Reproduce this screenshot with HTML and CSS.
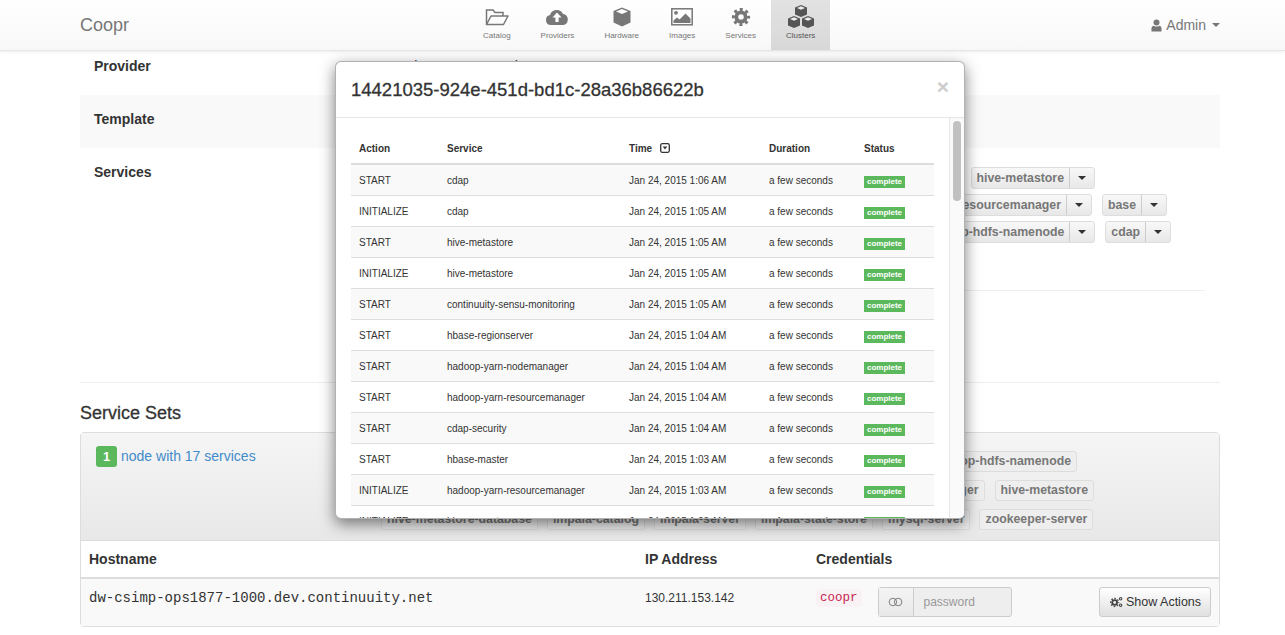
FILE: index.html
```html
<!DOCTYPE html>
<html lang="en">
<head>
    <meta charset="UTF-8">
    <title>Coopr - Cluster</title>
    <link rel="stylesheet" href="styles.css">
</head>
<body>
    <header class="navbar">
        <a class="brand">Coopr</a>
        <nav class="nav-icons">
            <a class="nav-item">
                <svg class="nav-svg" viewBox="0 0 24 20"><path d="M1.5 17.5V3h6.5l2 2.5h8V9" fill="none" stroke="#777" stroke-width="1.5"/><path d="M1.5 17.5 6 9h17l-4.5 8.5z" fill="none" stroke="#777" stroke-width="1.5" stroke-linejoin="round"/></svg>
                <span>Catalog</span>
            </a>
            <a class="nav-item">
                <svg class="nav-svg" viewBox="0 0 24 20"><path d="M6 18a5 5 0 0 1-1-9.9A7 7 0 0 1 18 7a5.6 5.6 0 0 1 .5 11z" fill="#777"/><path d="M12 5.5 16.5 10.5H13.6V15H10.4V10.5H7.5z" fill="#fff"/></svg>
                <span>Providers</span>
            </a>
            <a class="nav-item">
                <svg class="nav-svg" viewBox="0 0 24 20"><path d="M12 .5 20.5 4V15.5L12 19.5 3.5 15.5V4z" fill="#777"/><path d="M12 2 18 4.5 12 7 6 4.5z" fill="#fff"/></svg>
                <span>Hardware</span>
            </a>
            <a class="nav-item">
                <svg class="nav-svg" viewBox="0 0 24 20"><rect x="1.8" y="1.8" width="20.4" height="16" fill="none" stroke="#777" stroke-width="1.5"/><circle cx="6" cy="5.8" r="1.9" fill="#777"/><path d="M3.5 16v-2.5l3.5-3 2.5 2 6-6 5 5V16z" fill="#777"/></svg>
                <span>Images</span>
            </a>
            <a class="nav-item">
                <svg class="nav-svg" viewBox="0 0 24 20"><circle cx="12" cy="10" r="4.7" fill="none" stroke="#777" stroke-width="3.8"/><circle cx="12" cy="10" r="7.6" fill="none" stroke="#777" stroke-width="3" stroke-dasharray="3 2.97" stroke-dashoffset="1.5"/></svg>
                <span>Services</span>
            </a>
            <a class="nav-item active">
                <svg class="nav-svg cubes-svg" viewBox="0 0 28 24">
                    <defs>
                        <g id="small-cube"><path d="M6 0 12 2.5V9.5L6 12 0 9.5V2.5z" fill="#555"/><path d="M6 1.3 10 3 6 4.7 2 3z" fill="#eee"/></g>
                    </defs>
                    <use href="#small-cube" x="8" y="0"/>
                    <use href="#small-cube" x="1" y="11"/>
                    <use href="#small-cube" x="15" y="11"/>
                </svg>
                <span>Clusters</span>
            </a>
        </nav>
        <a class="user-menu">
            <svg class="user-svg" viewBox="0 0 12 14"><circle cx="6" cy="3.8" r="3.3" fill="#777"/><path d="M.5 13.5V10Q.5 7.2 3 7.2 6 9.2 9 7.2 11.5 7.2 11.5 10V13.5z" fill="#777"/></svg>
            Admin
            <span class="caret"></span>
        </a>
    </header>

    <main class="container">
        <div class="info-row first">
            <div class="info-label">Provider</div>
            <div>Google Compute Engine</div>
        </div>
        <div class="info-row striped">
            <div class="info-label">Template</div>
            <div>cdap-distributed</div>
        </div>
        <div class="info-row services-row">
            <div class="info-label">Services</div>
            <div class="service-col">
                <div class="tag-line line-a">
                    <span class="btn-tag grow"><b>hbase-master</b><i><em class="caret"></em></i></span>
                    <span class="btn-tag"><b>hadoop-hdfs-datanode</b><i><em class="caret"></em></i></span>
                    <span class="btn-tag"><b>hbase-regionserver</b><i><em class="caret"></em></i></span>
                    <span class="btn-tag"><b>hive-metastore</b><i><em class="caret"></em></i></span>
                </div>
                <div class="tag-line line-b">
                    <span class="btn-tag grow"><b>hive-metastore-database</b><i><em class="caret"></em></i></span>
                    <span class="btn-tag"><b>impala-catalog</b><i><em class="caret"></em></i></span>
                    <span class="btn-tag"><b>impala-server</b><i><em class="caret"></em></i></span>
                    <span class="btn-tag"><b>hadoop-yarn-resourcemanager</b><i><em class="caret"></em></i></span>
                    <span class="btn-tag"><b>base</b><i><em class="caret"></em></i></span>
                </div>
                <div class="tag-line line-c">
                    <span class="btn-tag grow"><b>impala-state-store</b><i><em class="caret"></em></i></span>
                    <span class="btn-tag"><b>mysql-server</b><i><em class="caret"></em></i></span>
                    <span class="btn-tag"><b>zookeeper-server</b><i><em class="caret"></em></i></span>
                    <span class="btn-tag"><b>hadoop-hdfs-namenode</b><i><em class="caret"></em></i></span>
                    <span class="btn-tag"><b>cdap</b><i><em class="caret"></em></i></span>
                </div>
                <hr class="service-rule">
            </div>
        </div>

        <h3 class="section-title">Service Sets</h3>
        <section class="panel">
            <div class="panel-head">
                <div class="node-count"><span class="count-badge">1</span><a>node with 17 services</a></div>
                <div class="set-tags">
                    <div class="tag-line set-a">
                        <span class="plain-tag grow">base</span>
                        <span class="plain-tag">cdap</span>
                        <span class="plain-tag">cdap-security</span>
                        <span class="plain-tag">hadoop-hdfs-datanode</span>
                        <span class="plain-tag">hadoop-hdfs-namenode</span>
                    </div>
                    <div class="tag-line set-b">
                        <span class="plain-tag grow">hbase-master</span>
                        <span class="plain-tag">hbase-regionserver</span>
                        <span class="plain-tag">hadoop-yarn-nodemanager</span>
                        <span class="plain-tag">hive-metastore</span>
                    </div>
                    <div class="tag-line set-c">
                        <span class="plain-tag">hive-metastore-database</span>
                        <span class="plain-tag">impala-catalog</span>
                        <span class="plain-tag">impala-server</span>
                        <span class="plain-tag">impala-state-store</span>
                        <span class="plain-tag">mysql-server</span>
                        <span class="plain-tag">zookeeper-server</span>
                    </div>
                </div>
            </div>
            <table class="host-table">
                <thead>
                    <tr><th class="col-host">Hostname</th><th class="col-ip">IP Address</th><th>Credentials</th></tr>
                </thead>
                <tbody>
                    <tr>
                        <td class="hostname">dw-csimp-ops1877-1000.dev.continuuity.net</td>
                        <td class="ip">130.211.153.142</td>
                        <td class="creds">
                            <div class="cred-cell">
                                <code class="user-code">coopr</code>
                                <div class="input-group">
                                    <span class="addon"><svg class="toggle-svg" viewBox="0 0 16 10"><circle cx="5.2" cy="5" r="4" fill="none" stroke="#777" stroke-width="1"/><circle cx="10.8" cy="5" r="4" fill="none" stroke="#777" stroke-width="1"/></svg></span>
                                    <span class="fake-input">password</span>
                                </div>
                                <button class="btn-actions">
                                    <svg class="cogs-svg" viewBox="0 0 14 13"><circle cx="5" cy="7" r="2.6" fill="none" stroke="#444" stroke-width="2"/><circle cx="5" cy="7" r="4.4" fill="none" stroke="#444" stroke-width="1.4" stroke-dasharray="1.7 1.75" stroke-dashoffset=".85"/><circle cx="11.5" cy="3" r="1.3" fill="none" stroke="#444" stroke-width="1.2"/><circle cx="11.5" cy="10" r="1.3" fill="none" stroke="#444" stroke-width="1.2"/></svg>
                                    Show Actions
                                </button>
                            </div>
                        </td>
                    </tr>
                </tbody>
            </table>
        </section>
    </main>

    <div class="modal">
        <div class="modal-header">
            <h4>14421035-924e-451d-bd1c-28a36b86622b</h4>
            <span class="close">×</span>
        </div>
        <div class="modal-body">
            <table class="task-table">
                <thead>
                    <tr>
                        <th class="c-action">Action</th>
                        <th class="c-service">Service</th>
                        <th class="c-time">Time <svg class="sort-svg" viewBox="0 0 10 10"><rect x=".7" y=".7" width="8.6" height="8.6" rx="1.5" fill="none" stroke="#333" stroke-width="1.3"/><path d="M2.7 3.6h4.6L5 6.6z" fill="#333"/></svg></th>
                        <th class="c-duration">Duration</th>
                        <th>Status</th>
                    </tr>
                </thead>
                <tbody>
                    <tr><td>START</td><td>cdap</td><td>Jan 24, 2015 1:06 AM</td><td>a few seconds</td><td><span class="label-ok">complete</span></td></tr>
                    <tr><td>INITIALIZE</td><td>cdap</td><td>Jan 24, 2015 1:05 AM</td><td>a few seconds</td><td><span class="label-ok">complete</span></td></tr>
                    <tr><td>START</td><td>hive-metastore</td><td>Jan 24, 2015 1:05 AM</td><td>a few seconds</td><td><span class="label-ok">complete</span></td></tr>
                    <tr><td>INITIALIZE</td><td>hive-metastore</td><td>Jan 24, 2015 1:05 AM</td><td>a few seconds</td><td><span class="label-ok">complete</span></td></tr>
                    <tr><td>START</td><td>continuuity-sensu-monitoring</td><td>Jan 24, 2015 1:05 AM</td><td>a few seconds</td><td><span class="label-ok">complete</span></td></tr>
                    <tr><td>START</td><td>hbase-regionserver</td><td>Jan 24, 2015 1:04 AM</td><td>a few seconds</td><td><span class="label-ok">complete</span></td></tr>
                    <tr><td>START</td><td>hadoop-yarn-nodemanager</td><td>Jan 24, 2015 1:04 AM</td><td>a few seconds</td><td><span class="label-ok">complete</span></td></tr>
                    <tr><td>START</td><td>hadoop-yarn-resourcemanager</td><td>Jan 24, 2015 1:04 AM</td><td>a few seconds</td><td><span class="label-ok">complete</span></td></tr>
                    <tr><td>START</td><td>cdap-security</td><td>Jan 24, 2015 1:04 AM</td><td>a few seconds</td><td><span class="label-ok">complete</span></td></tr>
                    <tr><td>START</td><td>hbase-master</td><td>Jan 24, 2015 1:03 AM</td><td>a few seconds</td><td><span class="label-ok">complete</span></td></tr>
                    <tr><td>INITIALIZE</td><td>hadoop-yarn-resourcemanager</td><td>Jan 24, 2015 1:03 AM</td><td>a few seconds</td><td><span class="label-ok">complete</span></td></tr>
                    <tr><td>INITIALIZE</td><td>hbase-master</td><td>Jan 24, 2015 1:03 AM</td><td>a few seconds</td><td><span class="label-ok">complete</span></td></tr>
                </tbody>
            </table>
            <div class="scroll-track"><div class="scroll-thumb"></div></div>
        </div>
    </div>
</body>
</html>
```

FILE: styles.css
```css
html, body {
    height: 635px;
    overflow: hidden;
}
body {
    font-family: "Liberation Sans", Arial, sans-serif;
    font-size: 14px;
    line-height: 20px;
    margin: 0;
    color: #333;
    background-color: #fff;
}
.navbar {
    display: flex;
    align-items: stretch;
    height: 50px;
    padding: 0 65px 0 80px;
    background: linear-gradient(to bottom, #fff, #f8f8f8);
    border-bottom: 1px solid #e7e7e7;
    box-shadow: 0 1px 3px rgba(0, 0, 0, 0.08);
    position: relative;
    z-index: 2;
}
.brand {
    width: 388px;
    font-size: 18px;
    line-height: 50px;
    color: #777;
}
.nav-icons {
    display: flex;
}
.nav-item {
    display: flex;
    flex-direction: column;
    align-items: center;
    padding: 0 15px;
    font-size: 8px;
    line-height: 12px;
    color: #777;
}
.nav-item span {
    margin-top: 3px;
}
.nav-svg {
    width: 24px;
    height: 20px;
    margin-top: 7px;
}
.nav-item.active {
    background: linear-gradient(to bottom, #e2e2e2, #d8d8d8);
    color: #555;
}
.cubes-svg {
    width: 28px;
    height: 24px;
    margin-top: 5px;
}
.cubes-svg + span {
    margin-top: 1px;
}
.user-menu {
    margin-left: auto;
    display: flex;
    align-items: center;
    gap: 4px;
    color: #777;
}
.user-svg {
    width: 11px;
    height: 13px;
}
.caret {
    display: inline-block;
    width: 0;
    height: 0;
    margin-left: 2px;
    border-top: 4px solid #777;
    border-left: 4px solid transparent;
    border-right: 4px solid transparent;
}

.container {
    margin: 0 65px 0 80px;
}
.info-row {
    display: grid;
    grid-template-columns: 300px 1fr;
    height: 53px;
    box-sizing: border-box;
    padding-top: 14px;
}
.info-row.first {
    height: 44px;
    padding-top: 5px;
}
.info-row.striped {
    background-color: #f9f9f9;
}
.info-label {
    padding-left: 14px;
    font-weight: bold;
}
.services-row {
    height: 235px;
    padding-top: 19px;
    border-bottom: 1px solid #eee;
}
.services-row .info-label {
    margin-top: -5px;
}
.service-col {
    padding-right: 15px;
}
.tag-line {
    display: flex;
    gap: 10px;
    white-space: nowrap;
}
.line-a { width: 715px; }
.line-b { width: 787px; }
.line-c { width: 791px; }
.set-a { width: 696px; }
.set-b { width: 713px; }
.set-c { gap: 9px; }
.grow {
    flex-grow: 1;
    justify-content: space-between;
}
.btn-tag {
    display: flex;
    height: 22px;
    box-sizing: border-box;
    border: 1px solid #ddd;
    border-radius: 3px;
    background: linear-gradient(to bottom, #f8f8f8, #e8e8e8);
    font-size: 12.3px;
    line-height: 20px;
    color: #777;
    margin-bottom: 5px;
}
.btn-tag b {
    padding: 0 5px;
}
.btn-tag i {
    display: flex;
    align-items: center;
    padding: 0 8px;
    border-left: 1px solid #ccc;
}
.btn-tag .caret {
    border-top-color: #333;
    margin: 0;
}
.service-rule {
    margin: 42px 0 0;
    border: 0;
    border-top: 1px solid #eee;
}
.section-title {
    margin: 20px 0 9px;
    font-size: 18px;
    line-height: 20px;
    font-weight: normal;
    -webkit-text-stroke: 0.3px #333;
}
.panel {
    border: 1px solid #ddd;
    border-radius: 4px;
}
.panel-head {
    display: grid;
    grid-template-columns: 300px 1fr;
    height: 108px;
    box-sizing: border-box;
    padding-top: 13px;
    background: linear-gradient(to bottom, #f5f5f5, #e8e8e8);
    border-bottom: 1px solid #ddd;
}
.node-count {
    padding-left: 15px;
}
.node-count a {
    margin-left: 4px;
    color: #428bca;
}
.count-badge {
    display: inline-block;
    width: 21px;
    height: 21px;
    border-radius: 3px;
    background-color: #5cb85c;
    color: #fff;
    font-weight: bold;
    font-size: 13px;
    line-height: 21px;
    text-align: center;
}
.set-tags {
    margin-top: 5px;
}
.plain-tag {
    height: 21px;
    box-sizing: border-box;
    padding: 0 5px;
    border: 1px solid #ddd;
    border-radius: 3px;
    background-color: #eee;
    font-size: 12.3px;
    font-weight: bold;
    line-height: 19px;
    color: #777;
    margin-bottom: 8px;
}
.host-table {
    width: 100%;
    border-collapse: separate;
    border-spacing: 0;
    table-layout: fixed;
}
.host-table th {
    box-sizing: border-box;
    height: 38px;
    padding: 0 0 0 8px;
    text-align: left;
    border-bottom: 2px solid #ddd;
}
.col-host {
    width: 556px;
}
.col-ip {
    width: 171px;
}
.host-table td {
    box-sizing: border-box;
    height: 47px;
    padding: 0 0 0 8px;
    background-color: #f9f9f9;
    font-size: 12px;
}
.host-table td.hostname,
.host-table td.ip {
    vertical-align: top;
    padding-top: 9px;
}
.host-table td.hostname {
    font-family: "Liberation Mono", monospace;
    font-size: 14px;
}
.host-table td.creds {
    vertical-align: top;
    padding-top: 8px;
}
.cred-cell {
    display: flex;
    align-items: center;
}
.user-code {
    margin-bottom: 9px;
    padding: 2px 4px;
    font-family: "Liberation Mono", monospace;
    font-size: 12.5px;
    line-height: 14px;
    color: #c7254e;
    background-color: #f9f2f4;
    border-radius: 4px;
    margin-right: 16px;
}
.input-group {
    display: flex;
    height: 30px;
    width: 134px;
    box-sizing: border-box;
    border: 1px solid #ccc;
    border-radius: 3px;
    background-color: #eee;
    font-size: 12px;
}
.addon {
    display: flex;
    align-items: center;
    justify-content: center;
    width: 34px;
    border-right: 1px solid #ccc;
    background: linear-gradient(to bottom, #f4f4f4, #e8e8e8);
}
.toggle-svg {
    width: 15px;
    height: 10px;
}
.fake-input {
    padding-left: 10px;
    line-height: 28px;
    color: #999;
}
.btn-actions {
    display: flex;
    align-items: center;
    gap: 3px;
    height: 30px;
    width: 112px;
    margin-left: auto;
    margin-right: 8px;
    padding: 0 0 0 10px;
    border: 1px solid #ccc;
    border-radius: 3px;
    background: linear-gradient(to bottom, #fff, #e0e0e0);
    font-family: "Liberation Sans", Arial, sans-serif;
    font-size: 12.5px;
    color: #333;
}
.cogs-svg {
    width: 13px;
    height: 12px;
}

.modal {
    position: absolute;
    left: 335px;
    top: 61px;
    width: 628px;
    height: 456px;
    background-color: #fff;
    border: 1px solid rgba(0, 0, 0, 0.3);
    border-radius: 6px;
    box-shadow: 0 5px 15px rgba(0, 0, 0, 0.5);
    z-index: 3;
    overflow: hidden;
}
.modal-header {
    display: flex;
    justify-content: space-between;
    height: 55px;
    padding: 0 15px;
    border-bottom: 1px solid #e5e5e5;
}
.modal-header h4 {
    margin: 18px 0 0;
    font-size: 18.5px;
    line-height: 20px;
    font-weight: normal;
    -webkit-text-stroke: 0.3px #333;
}
.close {
    margin-top: 14px;
    font-size: 21px;
    font-weight: bold;
    line-height: 21px;
    color: #ccc;
}
.modal-body {
    position: relative;
    height: 400px;
    padding: 15px 0 0 15px;
    overflow: hidden;
}
.task-table {
    width: 583px;
    border-collapse: separate;
    border-spacing: 0;
    table-layout: fixed;
    font-size: 10px;
    line-height: 14px;
}
.c-action { width: 88px; }
.c-service { width: 182px; }
.c-time { width: 140px; }
.c-duration { width: 95px; }
.task-table th {
    box-sizing: border-box;
    height: 32px;
    padding: 2px 0 0 8px;
    text-align: left;
    border-bottom: 2px solid #ddd;
}
.sort-svg {
    width: 10px;
    height: 10px;
    margin-left: 5px;
    vertical-align: -1px;
}
.task-table td {
    box-sizing: border-box;
    height: 31px;
    padding: 2px 0 0 8px;
    border-bottom: 1px solid #ddd;
}
.task-table tbody tr:nth-child(odd) td {
    background-color: #f9f9f9;
}
.label-ok {
    display: block;
    width: 41px;
    height: 12px;
    margin-top: 2px;
    background-color: #5cb85c;
    color: #fff;
    font-size: 8px;
    font-weight: bold;
    line-height: 12px;
    text-align: center;
}
.scroll-track {
    position: absolute;
    top: 0;
    right: 0;
    width: 14px;
    height: 100%;
    background-color: #fafafa;
    border-left: 1px solid #e8e8e8;
}
.scroll-thumb {
    width: 8px;
    height: 80px;
    margin: 3px 0 0 3px;
    background-color: #c1c1c1;
    border-radius: 4px;
}
```
